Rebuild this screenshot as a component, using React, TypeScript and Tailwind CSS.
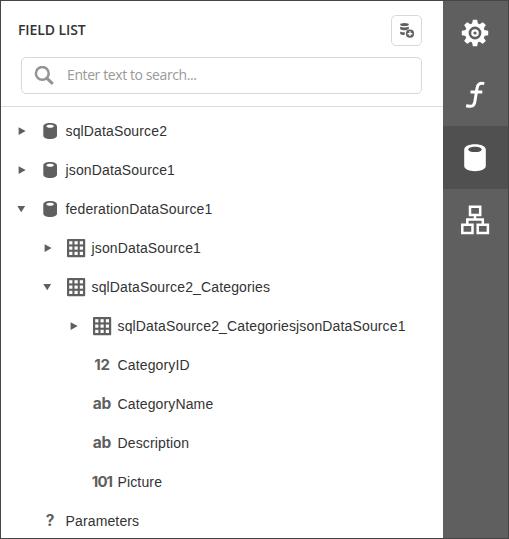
import type { ReactNode } from "react";

const Arrow = ({ open }: { open?: boolean }) => (
  <svg className="h-3 w-3 shrink-0 fill-[#5f5f5f]" viewBox="0 0 12 12">
    {open ? <path d="M1.300 3h7.800L5.200 9.300z" /> : <path d="M2.600 2.200v7.800L9.600 6.100z" />}
  </svg>
);

const Cylinder = () => (
  <svg className="h-5 w-5 fill-[#5f5f5f]" viewBox="0 0 20 20">
    <path
      fillRule="evenodd"
      d="M3.300 5.500C3.300 3.400 6 2 10.100 2S17 3.400 17 5.500v9c0 2.200-2.800 3.500-6.900 3.500s-6.800-1.300-6.800-3.500zM10.100 3.800c-2.200 0-3.800.6-3.800 1.500s1.600 1.500 3.800 1.500 3.800-.6 3.800-1.500-1.600-1.500-3.800-1.500z"
    />
  </svg>
);

const Table = () => (
  <svg className="h-5 w-5" viewBox="0 0 20 20">
    <rect x="1" y="1" width="18.200" height="18.200" rx="1" className="fill-[#5f5f5f]" />
    {[3.2, 8.5, 13.8].map((y) =>
      [3.2, 8.5, 13.8].map((x) => (
        <rect key={`${x}-${y}`} x={x} y={y} width="3.200" height="3.200" className="fill-white" />
      )),
    )}
  </svg>
);

const glyphStyles = {
  digits: "text-[15px] tracking-[-0.3px]",
  binary: "text-[15px] tracking-[-0.9px]",
  text: "text-[15.500px] tracking-[-0.2px]",
};

const Glyph = ({ kind, children }: { kind: keyof typeof glyphStyles; children: string }) => (
  <span className={`font-['Inter',sans-serif] leading-5 font-bold text-[#5f5f5f] ${glyphStyles[kind]}`}>
    {children}
  </span>
);

type Item = { label: string; level: number; arrow?: "open" | "closed"; icon: ReactNode };

const items: Item[] = [
  { label: "sqlDataSource2", level: 0, arrow: "closed", icon: <Cylinder /> },
  { label: "jsonDataSource1", level: 0, arrow: "closed", icon: <Cylinder /> },
  { label: "federationDataSource1", level: 0, arrow: "open", icon: <Cylinder /> },
  { label: "jsonDataSource1", level: 1, arrow: "closed", icon: <Table /> },
  { label: "sqlDataSource2_Categories", level: 1, arrow: "open", icon: <Table /> },
  { label: "sqlDataSource2_CategoriesjsonDataSource1", level: 2, arrow: "closed", icon: <Table /> },
  { label: "CategoryID", level: 2, icon: <Glyph kind="digits">12</Glyph> },
  { label: "CategoryName", level: 2, icon: <Glyph kind="text">ab</Glyph> },
  { label: "Description", level: 2, icon: <Glyph kind="text">ab</Glyph> },
  { label: "Picture", level: 2, icon: <Glyph kind="binary">101</Glyph> },
  { label: "Parameters", level: 0, icon: <Glyph kind="text">?</Glyph> },
];

const indents = ["pl-[15px]", "pl-[41px]", "pl-[67px]"];

const Gear = () => (
  <svg className="h-8 w-8 fill-white" viewBox="-16 -16 32 32">
    <circle r="8.200" strokeWidth="3.600" className="fill-none stroke-white" />
    {[0, 45, 90, 135, 180, 225, 270, 315].map((angle) => (
      <path key={angle} d="M-3-9l.8-4q0-.2.500-.2h3.400q.5 0 .5.200l.8 4z" transform={`rotate(${angle})`} />
    ))}
    <circle r="2.700" strokeWidth="2.200" className="fill-none stroke-white" />
  </svg>
);

const tools: ReactNode[] = [
  <Gear />,
  <svg className="h-8 w-8 fill-none stroke-white" viewBox="0 0 32 32" strokeWidth="3">
    <path d="M25.300 4.600c-4.800-1-6.600.4-7.300 4.700l-2.100 13.200c-.8 4.800-3 5.400-8.800 4.200M11.500 13h11.800" />
  </svg>,
  <svg className="h-8 w-8 fill-white" viewBox="0 0 32 32">
    <path
      fillRule="evenodd"
      d="M5.200 7.500C5.200 4.400 9.600 2.200 16 2.200s10.800 2.200 10.800 5.300v16.300c0 3.200-4.400 5.400-10.800 5.400S5.200 27 5.200 23.800zM16 4.700c-4 0-6.700 1.200-6.700 2.700s2.700 2.700 6.700 2.700 6.700-1.200 6.700-2.700S20 4.700 16 4.700z"
    />
  </svg>,
  <svg className="h-8 w-8 fill-none stroke-white" viewBox="0 0 32 32" strokeWidth="2.500">
    <path d="M11 1.800h10.200V10H11zM3.300 19.800h10.200V28H3.300zM18.700 19.800h10.200V28H18.700zM16 10v4.500M8.300 20v-5.500h15.500V20" />
  </svg>,
];

export default function App() {
  return (
    <div className="flex h-[539px] w-[509px] overflow-hidden border border-[#474446] bg-white">
      <main className="flex w-[442px] flex-col">
        <header className="h-[106px] shrink-0 border-b border-[#dddddd] pr-[21px] pl-[17px]">
          <div className="flex h-14 items-center justify-between pt-[3px]">
            <h1 className="pb-[2px] font-['Open_Sans',sans-serif] text-sm font-semibold tracking-[-0.1px] text-[#333333]">
              FIELD LIST
            </h1>
            <button className="flex h-[31px] w-[31px] items-center justify-center rounded-[5px] border border-[#d8d8d8]">
              <svg className="h-5 w-5 fill-[#5f5f5f]" viewBox="0 0 20 20">
                <ellipse cx="7.500" cy="3.600" rx="4.300" ry="1.500" />
                <path d="M3.200 5.700c2.500 1.100 6.200 1.100 8.600 0v2.200c-1 .4-1.700.8-2.300 1.400-2.300.2-4.800 0-6.300-1zM3.200 10.400c1.400.7 2.900.9 4.700.9-.3.800-.4 1.800-.2 2.800-1.900 0-3.700-.3-4.500-1.100z" />
                <path
                  fillRule="evenodd"
                  d="M13 8.600a4.100 4.100 0 100 8.200 4.100 4.100 0 000-8.200zM12.300 10.300h1.400V12h1.700v1.400h-1.700v1.700h-1.400v-1.700h-1.700V12h1.700z"
                />
              </svg>
            </button>
          </div>
          <label className="ml-[3px] flex h-[37px] items-center rounded-[5px] border border-[#d8d8d8] pl-[12px]">
            <svg className="h-5 w-5 fill-none stroke-[#949494]" viewBox="0 0 20 20">
              <circle cx="8.300" cy="7.400" r="6.400" strokeWidth="2.500" />
              <path d="M12.500 11.800l6.300 6" strokeWidth="3" />
            </svg>
            <input
              className="ml-[13px] w-80 pb-px font-['Open_Sans',sans-serif] text-sm tracking-[-0.4px] outline-none placeholder:text-[#999999]"
              placeholder="Enter text to search..."
            />
          </label>
        </header>
        <ul className="pt-[4px] font-['Liberation_Sans',sans-serif] text-sm tracking-[0.14px] text-[#333333]">
          {items.map((item, i) => (
            <li key={i} className={`flex h-[39px] items-center ${indents[item.level]}`}>
              <span className="flex w-3 shrink-0">{item.arrow && <Arrow open={item.arrow === "open"} />}</span>
              <span className="ml-[12px] flex w-5 shrink-0 justify-center">{item.icon}</span>
              <span className="ml-[5.500px] whitespace-nowrap">{item.label}</span>
            </li>
          ))}
        </ul>
      </main>
      <nav className="flex w-[65px] flex-col bg-[#5f5f5f]">
        {tools.map((icon, i) => (
          <button
            key={i}
            className={`flex w-full items-center justify-center pr-[2px] ${i === 0 ? "h-[62px] pt-[2px]" : "h-[63px]"} ${i === 2 ? "bg-[#505050]" : ""}`}
          >
            {icon}
          </button>
        ))}
      </nav>
    </div>
  );
}
